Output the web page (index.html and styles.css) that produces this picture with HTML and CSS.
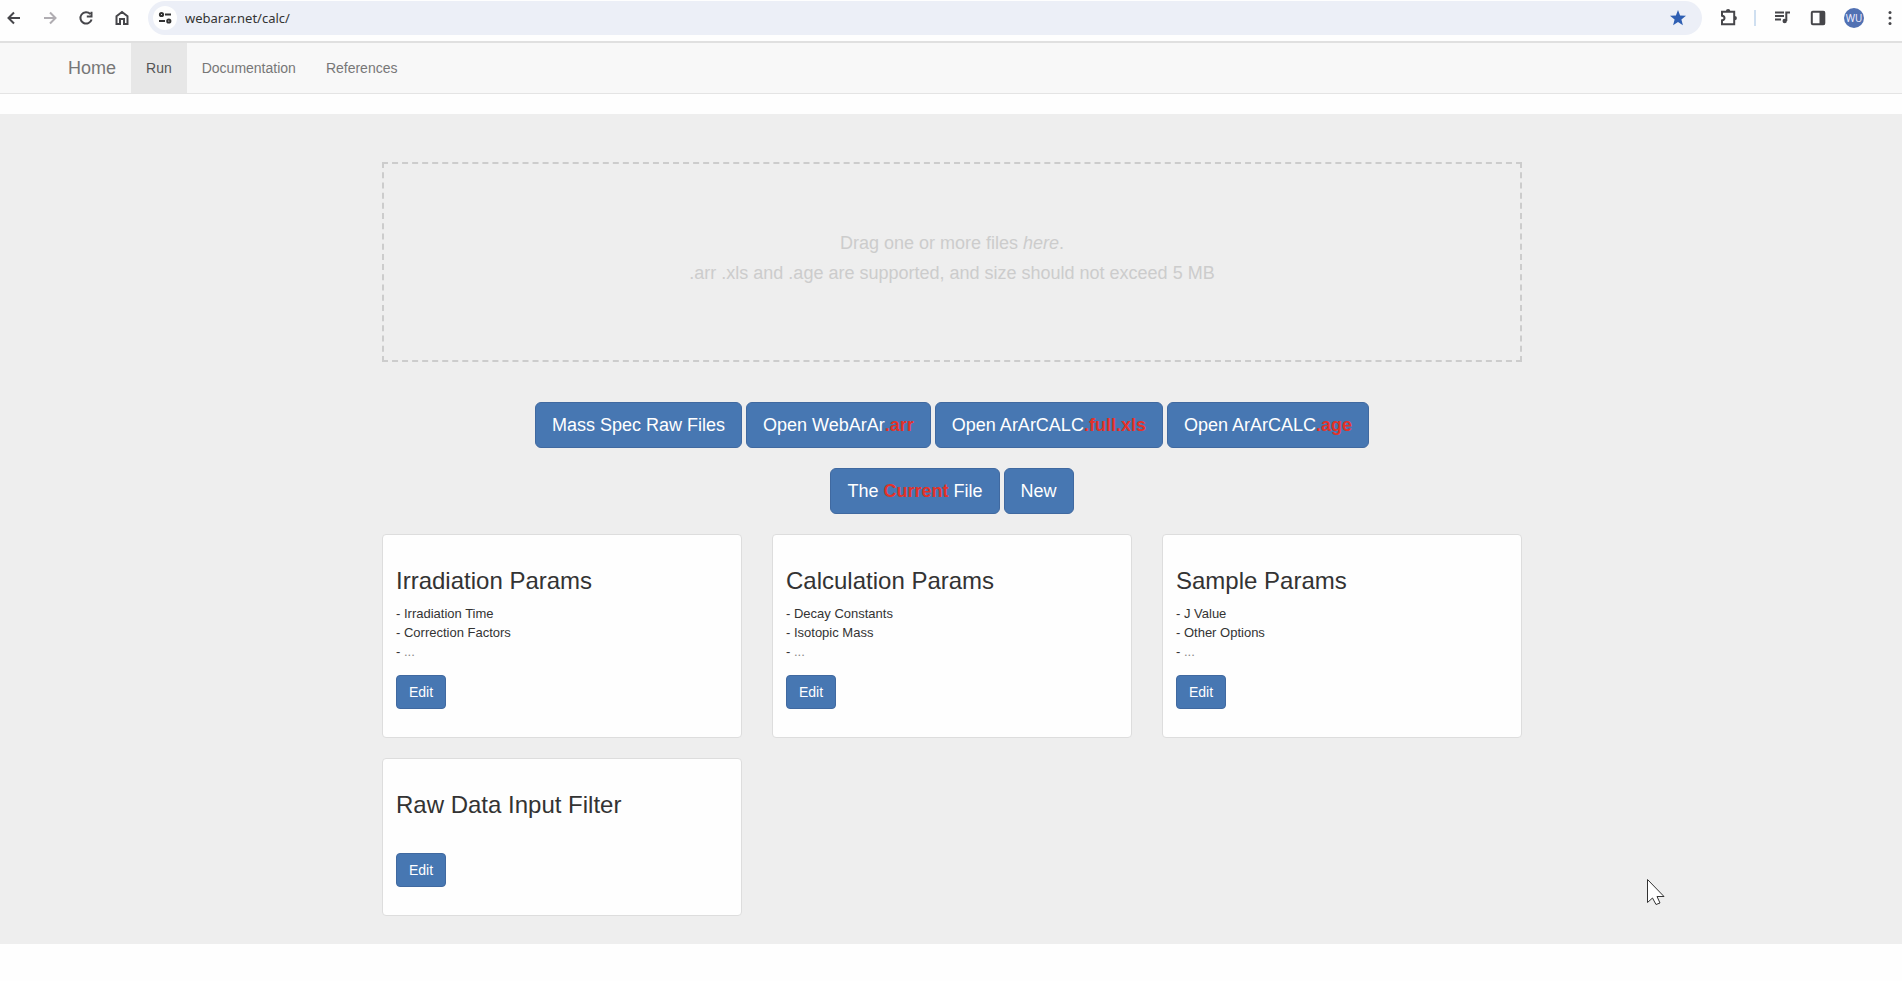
FILE: index.html
```html
<!DOCTYPE html>
<html lang="en">
<head>
<meta charset="utf-8">
<title>WebArAr - Run</title>
<link rel="stylesheet" href="styles.css">
</head>
<body>
<header class="toolbar">
  <button class="tool" type="button" aria-label="Back"><svg viewBox="0 0 20 20"><path d="M16 10H4.500M10 4.500L4.500 10l5.500 5.500"/></svg></button>
  <button class="tool tool-off" type="button" aria-label="Forward"><svg viewBox="0 0 20 20"><path d="M4 10h11.500M10 4.500l5.500 5.500-5.500 5.500"/></svg></button>
  <button class="tool" type="button" aria-label="Reload"><svg viewBox="0 0 20 20"><path d="M14.300 6A5.700 5.700 0 1 0 15.600 11.500M15.500 3.800v4.700h-4.700"/></svg></button>
  <button class="tool" type="button" aria-label="Home page"><svg viewBox="0 0 20 20"><path d="M4.500 16V8.300L10 4l5.500 4.300V16H12v-5H8v5z"/></svg></button>
  <div class="address">
    <button class="site-info" type="button" aria-label="Site information"><svg viewBox="0 0 20 20"><circle cx="6.500" cy="6.500" r="1.600"/><path d="M10 6.500h6M4 13h6"/><circle cx="13.800" cy="13" r="1.600"/></svg></button>
    <input class="url" type="text" aria-label="Address" value="webarar.net/calc/" spellcheck="false">
    <button class="tool star" type="button" aria-label="Bookmark"><svg viewBox="0 0 20 20"><path d="M10 2l2.100 5.400 5.900.400-4.600 3.700 1.500 5.700-4.900-3.200-4.900 3.200 1.500-5.700L2 7.800l5.900-.400z"/></svg></button>
  </div>
  <button class="tool" type="button" aria-label="Extensions"><svg viewBox="0 0 20 20"><path d="M4 3.800h12.200v12.400H4v-3.900q2.500-.300 2.500-2.300T4 7.700z"/><path class="solid" d="M7.900 3.300a2.200 2.200 0 0 1 4.400 0zM16.700 7.900a2.200 2.200 0 0 1 0 4.400z"/></svg></button>
  <span class="divider"></span>
  <button class="tool" type="button" aria-label="Media controls"><svg viewBox="0 0 20 20"><path d="M3 4.500h9M3 8h9M3 11.500h6"/><circle class="solid" cx="12.700" cy="13" r="2.200"/><path d="M14.300 13V4.500H18"/></svg></button>
  <button class="tool" type="button" aria-label="Side panel"><svg viewBox="0 0 20 20"><rect x="3.800" y="3.800" width="12.500" height="12.500" rx="1"/><path class="solid" d="M11.500 3.500h5v13h-5z"/></svg></button>
  <button class="avatar" type="button">WU</button>
  <button class="tool" type="button" aria-label="Menu"><svg viewBox="0 0 20 20"><g class="solid dots"><circle cx="10" cy="4.500" r="1.500"/><circle cx="10" cy="10" r="1.500"/><circle cx="10" cy="15.500" r="1.500"/></g></svg></button>
</header>

<nav class="navbar">
  <a class="brand" href="#">Home</a>
  <a class="nav-link active" href="#">Run</a>
  <a class="nav-link" href="#">Documentation</a>
  <a class="nav-link" href="#">References</a>
</nav>

<main class="hero">
  <div class="container">
    <section class="dropzone">
      <p>Drag one or more files <em>here</em>.</p>
      <p>.arr .xls and .age are supported, and size should not exceed 5 MB</p>
    </section>

    <div class="actions">
      <button class="btn btn-lg" type="button">Mass Spec Raw Files</button>
      <button class="btn btn-lg" type="button">Open WebArAr<b>.arr</b></button>
      <button class="btn btn-lg" type="button">Open ArArCALC<b>.full.xls</b></button>
      <button class="btn btn-lg" type="button">Open ArArCALC<b>.age</b></button>
    </div>
    <div class="actions">
      <button class="btn btn-lg" type="button">The <b>Current</b> File</button>
      <button class="btn btn-lg" type="button">New</button>
    </div>

    <div class="cards">
      <section class="card">
        <h3>Irradiation Params</h3>
        <ul><li>- Irradiation Time</li><li>- Correction Factors</li><li>- <span class="more">...</span></li></ul>
        <button class="btn" type="button">Edit</button>
      </section>
      <section class="card">
        <h3>Calculation Params</h3>
        <ul><li>- Decay Constants</li><li>- Isotopic Mass</li><li>- <span class="more">...</span></li></ul>
        <button class="btn" type="button">Edit</button>
      </section>
      <section class="card">
        <h3>Sample Params</h3>
        <ul><li>- J Value</li><li>- Other Options</li><li>- <span class="more">...</span></li></ul>
        <button class="btn" type="button">Edit</button>
      </section>
      <section class="card card-short">
        <h3>Raw Data Input Filter</h3>
        <button class="btn" type="button">Edit</button>
      </section>
    </div>
  </div>
</main>

<svg class="pointer" viewBox="0 0 20 28" aria-hidden="true"><path d="M1.500 1.500v23l5-4.500 3.500 6.500 4-1.500-3-6.500h7z"/></svg>
</body>
</html>
```
FILE: styles.css
```css
* { box-sizing: border-box; }

body {
  margin: 0;
  background: #fefefe;
  color: #333;
  font: 14px/20px "Liberation Sans", Arial, sans-serif;
}

button, input { font: inherit; }
button { margin: 0; cursor: pointer; }

/* Browser toolbar */
.toolbar {
  display: flex;
  align-items: center;
  gap: 16px;
  padding: 1px 2px 6px 4px;
  border-bottom: 2px solid #e0e0e0;
}

.tool {
  flex: none;
  width: 20px;
  height: 20px;
  padding: 0;
  border: 0;
  background: none;
  color: #46464a;
}

.tool-off { color: #b0adb2; }
.star { color: #2f5fb3; }

.toolbar svg {
  display: block;
  width: 20px;
  height: 20px;
  fill: none;
  stroke: currentColor;
  stroke-width: 2;
}

.toolbar .solid, .toolbar .star svg { fill: currentColor; stroke: none; }

.address {
  flex: 1;
  display: flex;
  align-items: center;
  height: 34px;
  padding: 0 14px 0 5px;
  border-radius: 17px;
  background: #eceff7;
}

.site-info {
  display: grid;
  place-items: center;
  width: 24px;
  height: 24px;
  padding: 0;
  border: 0;
  border-radius: 50%;
  background: #fefefe;
  color: #333;
}

.url {
  flex: 1;
  min-width: 0;
  margin-left: 8px;
  padding: 0;
  border: 0;
  background: none;
  color: #333;
  font: 13px/20px "Noto Sans", "Open Sans", sans-serif;
}

.divider {
  width: 2px;
  height: 16px;
  background: #cfdff0;
}

.avatar {
  width: 20px;
  height: 20px;
  padding: 0;
  border: 0;
  border-radius: 50%;
  background: #5171b3;
  color: #eef;
  font: 10px/20px "Noto Sans", sans-serif;
}

/* Site navigation */
.navbar {
  display: flex;
  padding-left: 53px;
  border-bottom: 1px solid #e4e4e4;
  background: #f8f8f8;
}

.navbar a {
  padding: 15px;
  color: #777;
  text-decoration: none;
}

.navbar .brand { font-size: 18px; }
.navbar .active { background: #e7e7e7; color: #555; }

/* Main panel */
.hero {
  margin-top: 20px;
  padding: 48px 15px 28px 17px;
  background: #eee;
}

.container {
  max-width: 1140px;
  margin: 0 auto;
}

.dropzone {
  min-height: 200px;
  margin-bottom: 40px;
  padding: 64px 20px;
  border: 2px dashed #ccc;
  color: #ccc;
  font-size: 18px;
  line-height: 30px;
  text-align: center;
}

.dropzone p { margin: 0; }

.actions {
  display: flex;
  flex-wrap: wrap;
  justify-content: center;
  gap: 4px;
  margin-bottom: 20px;
}

.btn {
  padding: 6px 12px;
  border: 1px solid #4069a0;
  border-radius: 4px;
  background: #4777b2;
  color: #fff;
}

.btn b { color: #e33229; }

.btn-lg {
  padding: 10px 16px;
  border-radius: 6px;
  font-size: 18px;
  line-height: 24px;
}

/* Parameter cards */
.cards {
  display: grid;
  grid-template-columns: repeat(3, 1fr);
  align-items: start;
  gap: 20px 30px;
}

.card {
  padding: 33px 13px 28px;
  border: 1px solid #ddd;
  border-radius: 4px;
  background: #fefefe;
}

.card h3 {
  margin: 0 0 10px;
  font-size: 24px;
  font-weight: 400;
  line-height: 26px;
}

.card ul {
  margin: 0 0 14px;
  padding: 0;
  list-style: none;
  font-size: 13px;
  line-height: 19px;
}

.card .more { color: #888; }
.card-short h3 { margin-bottom: 35px; }

/* Mouse pointer over the page */
.pointer {
  position: absolute;
  left: 1646px;
  top: 878px;
  width: 20px;
  height: 28px;
  fill: #fff;
  stroke: #333;
}
```
